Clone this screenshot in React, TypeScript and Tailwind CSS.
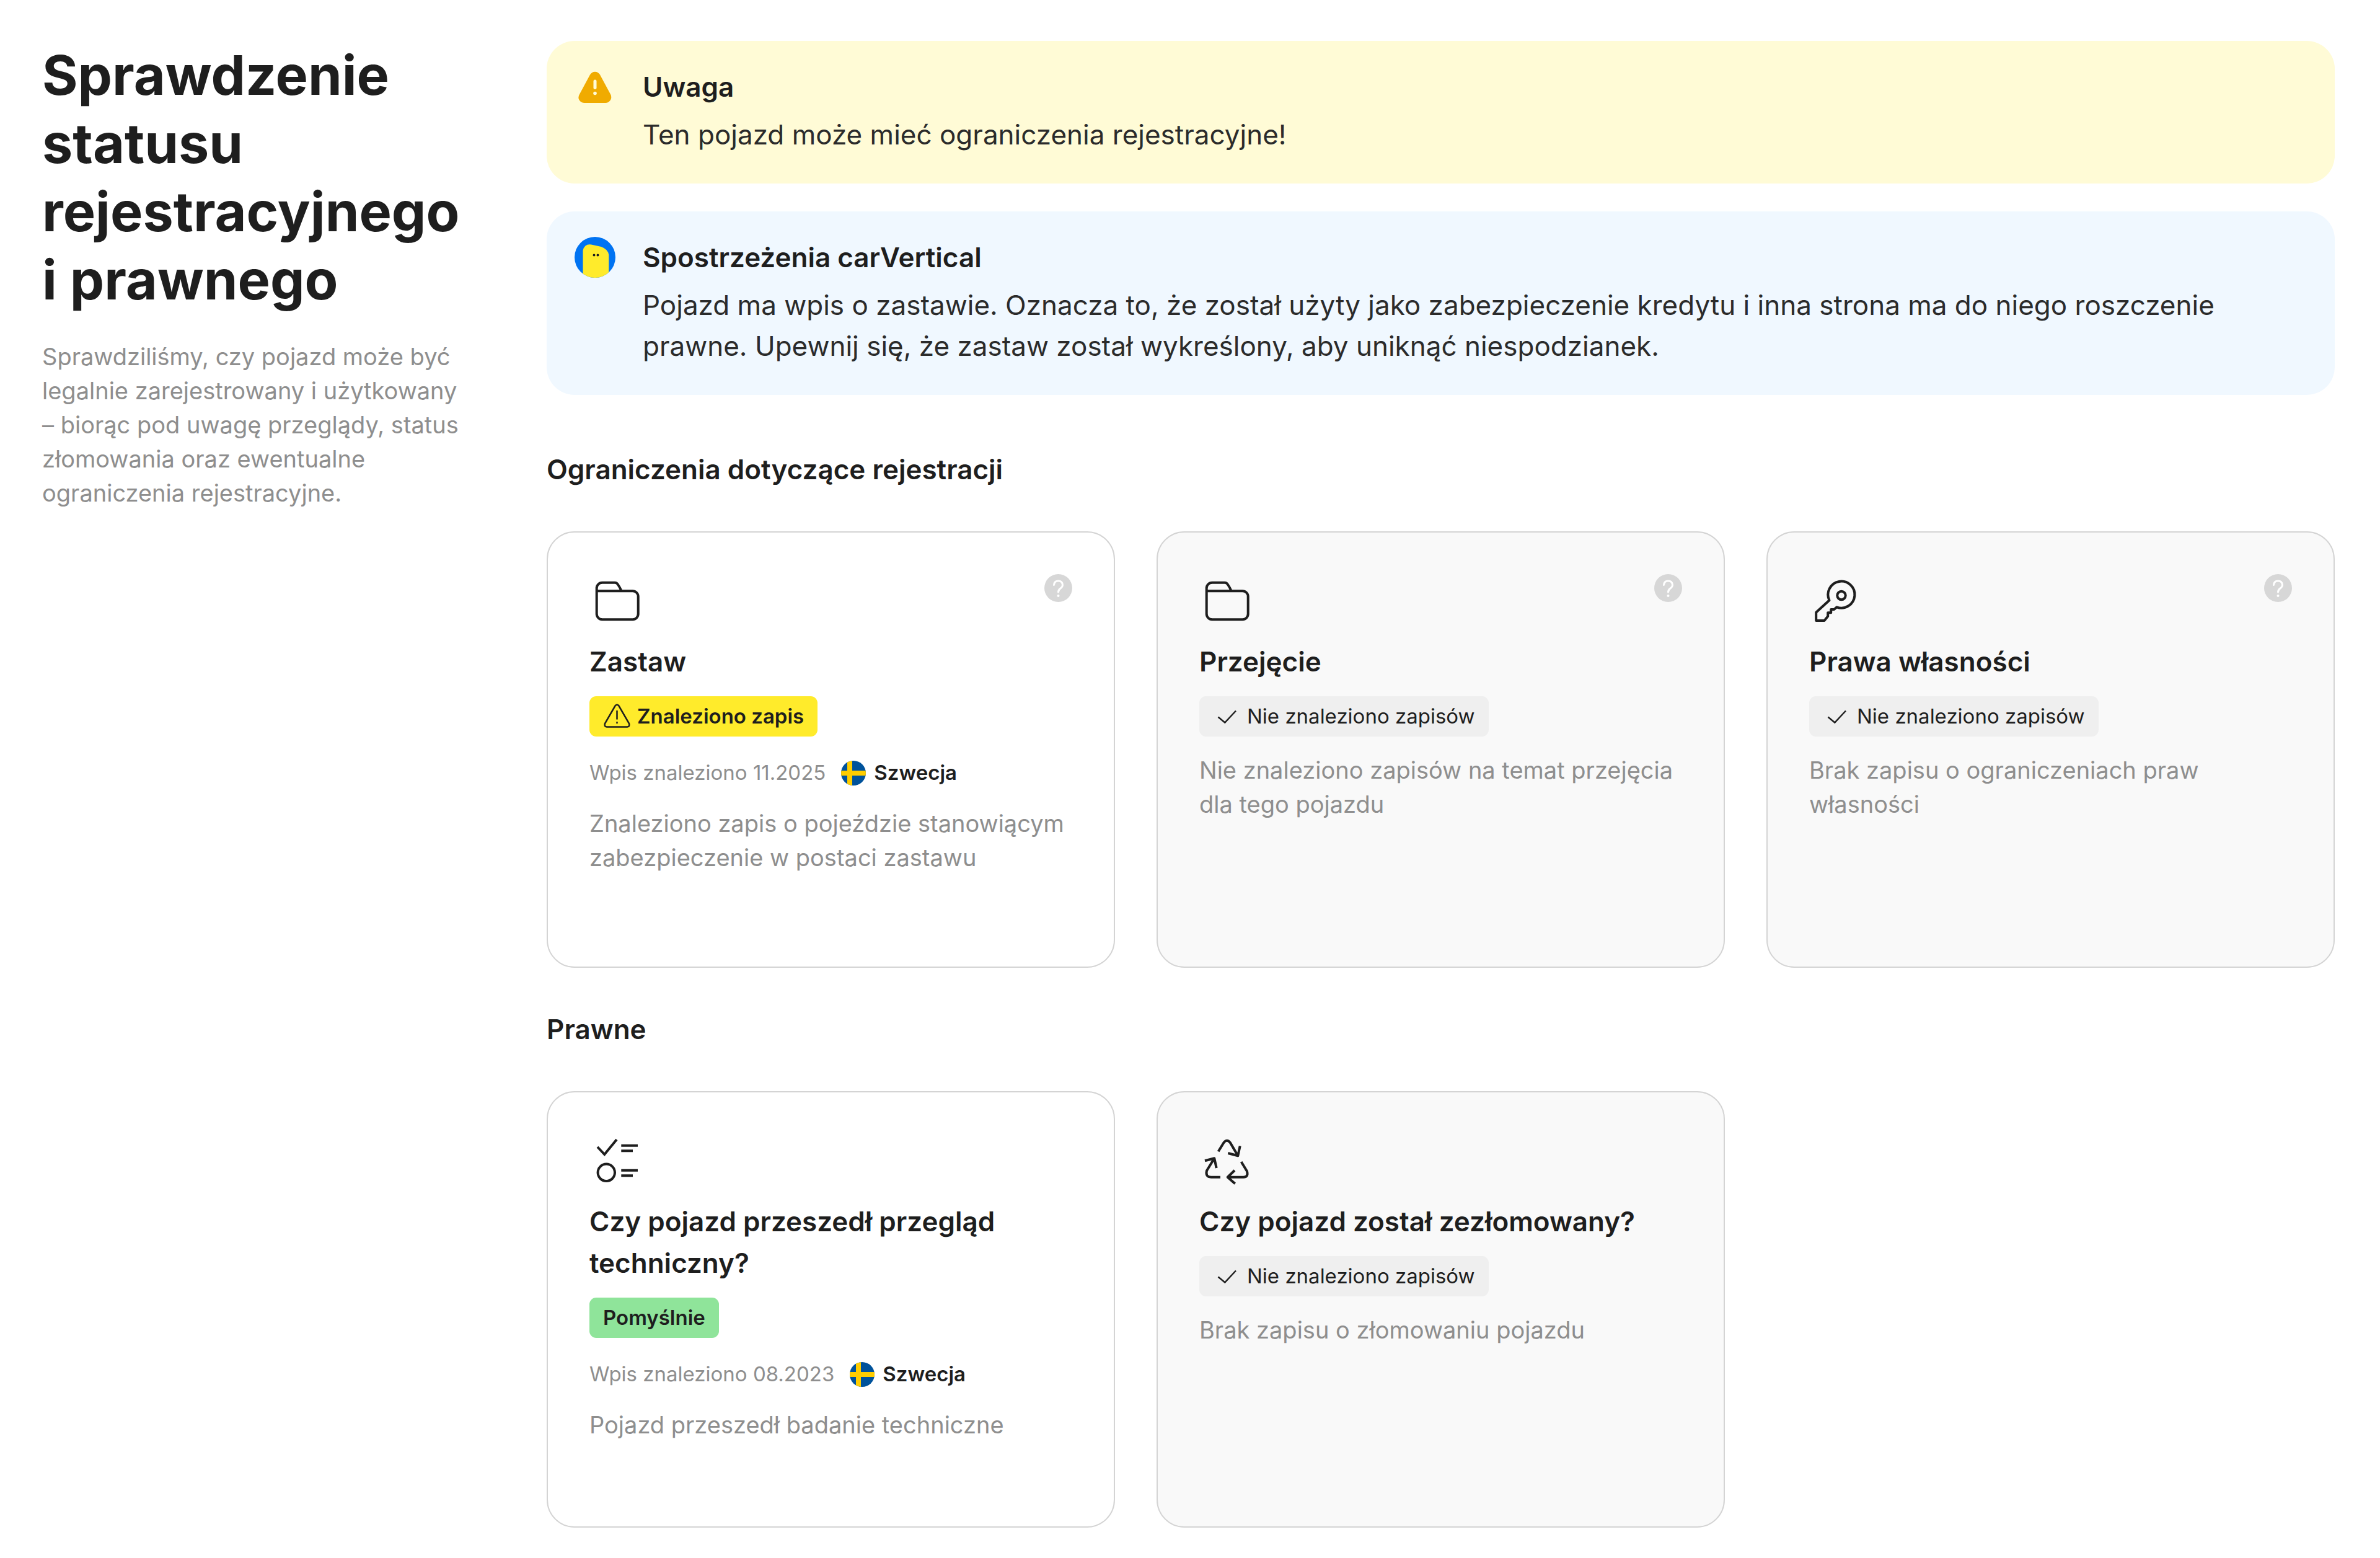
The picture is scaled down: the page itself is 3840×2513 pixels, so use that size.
import type { ReactNode } from 'react';

function FolderIcon() {
  return (
    <svg viewBox="0 0 90 90" className="size-[90px]" fill="none" stroke="#1e1e1e" strokeWidth="4" aria-hidden="true">
      <path d="M11.7 27.3H69.7a9 9 0 0 1 9 9V64.3a9 9 0 0 1-9 9H20.7a9 9 0 0 1-9-9V22.7a9 9 0 0 1 9-9H41q3.2 0 4.8 2.8Q49.5 22 51.7 27.3" />
    </svg>
  );
}

function KeyIcon() {
  return (
    <svg
      viewBox="0 0 90 90"
      className="size-[90px]"
      fill="none"
      stroke="#1e1e1e"
      strokeWidth="4"
      strokeLinejoin="round"
      aria-hidden="true"
    >
      <path d="M32.5 42.3A21.5 21.5 0 1 1 44.5 53.3L40.2 57H35.2V62.3H30.2V68L24.5 75H11.2V61.7Z" />
      <circle cx="52" cy="34.5" r="6.7" />
    </svg>
  );
}

function ChecklistIcon() {
  return (
    <svg viewBox="0 0 90 90" className="size-[90px]" fill="none" stroke="#1e1e1e" strokeWidth="4" aria-hidden="true">
      <path d="M13 21 24.3 33 44 9M51.3 18.7H78M51.3 27.3H70M51.3 58.7H78M51.3 67.3H70" />
      <circle cx="27.3" cy="62.3" r="13.7" />
    </svg>
  );
}

function RecycleIcon() {
  return (
    <svg
      viewBox="0 0 90 90"
      className="size-[90px]"
      fill="none"
      stroke="#1e1e1e"
      strokeWidth="4"
      strokeLinejoin="round"
      aria-hidden="true"
    >
      <path d="M30.7 28.3 39.5 14Q44.8 7.5 50 14.3L62.3 35.3M46.3 31 62.3 35.3 65.7 19.3" />
      <path d="M67.7 45 77 60.3Q79.5 69.7 71 69.7H45.7M57 58.7 45.7 69.7 57.7 80.3" />
      <path d="M34 69.7H19Q9.5 69.5 12 59.3L24.3 39.3M9 43.3 24.3 39.3 27.7 55" />
    </svg>
  );
}

function AlertIcon() {
  return (
    <svg viewBox="0 0 66 66" className="size-[66px]" aria-hidden="true">
      <path
        d="M25 13.5Q28 8.7 33 8.7T41 13.5L58.5 46Q60.5 51 57.5 55T50 59H16Q11 59 8 55T7.5 46Z"
        fill="#f0ab00"
      />
      <path d="M33 24V34.5" stroke="#fffbd6" strokeWidth="5" strokeLinecap="round" />
      <circle cx="33" cy="43.5" r="2.8" fill="#fffbd6" />
    </svg>
  );
}

function MascotIcon() {
  return (
    <svg viewBox="0 0 66 66" className="size-[66px]" aria-hidden="true">
      <clipPath id="mascot">
        <circle cx="33" cy="33" r="33" />
      </clipPath>
      <g clipPath="url(#mascot)">
        <rect width="66" height="66" fill="#0073f2" />
        <path d="M13.5 66V22Q16 11 27 12.5L43 16Q54 20 55.3 29V66Z" fill="#ffeb2b" />
        <circle cx="31.5" cy="29.5" r="2" fill="#1e1e1e" />
        <circle cx="37.5" cy="29.5" r="2" fill="#1e1e1e" />
      </g>
    </svg>
  );
}

function WarningIcon() {
  return (
    <svg viewBox="0 0 46 46" className="size-[46px]" fill="none" stroke="#1e1e1e" strokeWidth="2.5" aria-hidden="true">
      <path d="M19.5 5.5Q22.5 2 25.5 5.5L42 34Q43.5 39 39 39.5H6Q1.5 39 3 34Z" />
      <path d="M22.5 13V27.5M22.5 31V34" />
    </svg>
  );
}

function CheckIcon() {
  return (
    <svg viewBox="0 0 46 46" className="size-[46px]" fill="none" stroke="#1e1e1e" strokeWidth="2.5" aria-hidden="true">
      <path d="M8.5 23.5 19.3 32.5 37 13.5" />
    </svg>
  );
}

function SwedenFlag() {
  return (
    <svg viewBox="0 0 40 40" className="size-10" aria-hidden="true">
      <clipPath id="flag">
        <circle cx="20" cy="20" r="20" />
      </clipPath>
      <g clipPath="url(#flag)">
        <rect width="40" height="40" fill="#00529b" />
        <path d="M0 20H40M14 0V40" stroke="#ffcd00" strokeWidth="8" />
      </g>
    </svg>
  );
}

function HelpButton() {
  return (
    <button type="button" aria-label="Pomoc" className="size-[45px]">
      <svg viewBox="0 0 45 45" className="size-full" fill="none" aria-hidden="true">
        <circle cx="22.5" cy="22.5" r="22.5" fill="#d7d7d7" />
        <path
          d="M15.5 17.5Q16 11 22.5 11T29.5 17.5Q29.5 20.5 26 23T22.5 29"
          stroke="#fff"
          strokeWidth="3"
          strokeLinecap="round"
        />
        <circle cx="22.5" cy="35" r="2" fill="#fff" />
      </svg>
    </button>
  );
}

type Status = 'found' | 'none' | 'passed';

interface Check {
  title: string;
  icon: ReactNode;
  status: Status;
  date?: string;
  text: string;
  help?: boolean;
}

const registrationChecks: Check[] = [
  {
    title: 'Zastaw',
    icon: <FolderIcon />,
    status: 'found',
    date: '11.2025',
    text: 'Znaleziono zapis o pojeździe stanowiącym zabezpieczenie w postaci zastawu',
    help: true,
  },
  {
    title: 'Przejęcie',
    icon: <FolderIcon />,
    status: 'none',
    text: 'Nie znaleziono zapisów na temat przejęcia dla tego pojazdu',
    help: true,
  },
  {
    title: 'Prawa własności',
    icon: <KeyIcon />,
    status: 'none',
    text: 'Brak zapisu o ograniczeniach praw własności',
    help: true,
  },
];

const legalChecks: Check[] = [
  {
    title: 'Czy pojazd przeszedł przegląd techniczny?',
    icon: <ChecklistIcon />,
    status: 'passed',
    date: '08.2023',
    text: 'Pojazd przeszedł badanie techniczne',
  },
  {
    title: 'Czy pojazd został zezłomowany?',
    icon: <RecycleIcon />,
    status: 'none',
    text: 'Brak zapisu o złomowaniu pojazdu',
  },
];

function StatusBadge({ status }: { status: Status }) {
  const base = 'inline-flex h-[65px] items-center gap-[9px] rounded-[11px] px-[22px] text-[33px]';

  if (status === 'found') {
    return (
      <span className={`${base} bg-[#ffeb2b] font-semibold`}>
        <WarningIcon />
        Znaleziono zapis
      </span>
    );
  }
  if (status === 'passed') {
    return <span className={`${base} bg-[#8fe49a] font-semibold`}>Pomyślnie</span>;
  }
  return (
    <span className={`${base} bg-[#efefef]`}>
      <CheckIcon />
      Nie znaleziono zapisów
    </span>
  );
}

function CheckCard({ check }: { check: Check }) {
  return (
    <article
      className={`min-h-[704px] rounded-[45px] border-2 border-[#d4d4d4] p-[67px] ${
        check.status === 'none' ? 'bg-[#f9f9f9]' : 'bg-white'
      }`}
    >
      <div className="flex items-start justify-between">
        {check.icon}
        {check.help && <HelpButton />}
      </div>
      <h3 className="mt-[18px] text-[44px] leading-[67px] font-semibold">{check.title}</h3>
      <div className="mt-[22px] flex">
        <StatusBadge status={check.status} />
      </div>
      {check.date && (
        <div className="mt-[31px] flex items-center text-[33px] leading-[55px]">
          <span className="text-[#8e8e8e]">Wpis znaleziono {check.date}</span>
          <span className="ml-[25px] flex items-center gap-[13px] font-semibold">
            <SwedenFlag />
            Szwecja
          </span>
        </div>
      )}
      <p className="mt-[27px] text-[38px] leading-[55px] text-[#8e8e8e]">{check.text}</p>
    </article>
  );
}

function CheckGroup({ title, checks }: { title: string; checks: Check[] }) {
  return (
    <section className="mt-[65px]">
      <h2 className="text-[44px] leading-[68px] font-semibold">{title}</h2>
      <div className="mt-[66px] grid grid-cols-3 gap-[67px]">
        {checks.map((check) => (
          <CheckCard key={check.title} check={check} />
        ))}
      </div>
    </section>
  );
}

function Banner({ className, icon, title, text }: { className: string; icon: ReactNode; title: string; text: string }) {
  return (
    <div className={`flex gap-11 rounded-[45px] px-[45px] pt-[41px] pb-[46px] ${className}`}>
      <div className="shrink-0">{icon}</div>
      <div>
        <h2 className="text-[44px] leading-[66px] font-semibold">{title}</h2>
        <p className="mt-[11px] text-[44px] leading-[66px] text-[#2b2b2b]">{text}</p>
      </div>
    </div>
  );
}

export default function App() {
  return (
    <main className="flex gap-[124px] bg-white pt-[66px] pr-[73px] pb-12 pl-[68px] font-['Inter',sans-serif] text-[#1e1e1e]">
      <header className="w-[690px] shrink-0">
        <h1 className="text-[88px] leading-[110px] font-bold">
          Sprawdzenie statusu rejestracyjnego i&nbsp;prawnego
        </h1>
        <p className="mt-[42px] text-[38px] leading-[55px] text-[#8e8e8e]">
          Sprawdziliśmy, czy pojazd może być legalnie zarejestrowany i użytkowany – biorąc pod uwagę przeglądy, status
          złomowania oraz ewentualne ograniczenia rejestracyjne.
        </p>
      </header>
      <div className="min-w-0 flex-1">
        <div className="mb-[86px] flex flex-col gap-[45px]">
          <Banner
            className="bg-[#fffbd6]"
            icon={<AlertIcon />}
            title="Uwaga"
            text="Ten pojazd może mieć ograniczenia rejestracyjne!"
          />
          <Banner
            className="bg-[#f0f8ff]"
            icon={<MascotIcon />}
            title="Spostrzeżenia carVertical"
            text="Pojazd ma wpis o zastawie. Oznacza to, że został użyty jako zabezpieczenie kredytu i inna strona ma do niego roszczenie prawne. Upewnij się, że zastaw został wykreślony, aby uniknąć niespodzianek."
          />
        </div>
        <CheckGroup title="Ograniczenia dotyczące rejestracji" checks={registrationChecks} />
        <CheckGroup title="Prawne" checks={legalChecks} />
      </div>
    </main>
  );
}
